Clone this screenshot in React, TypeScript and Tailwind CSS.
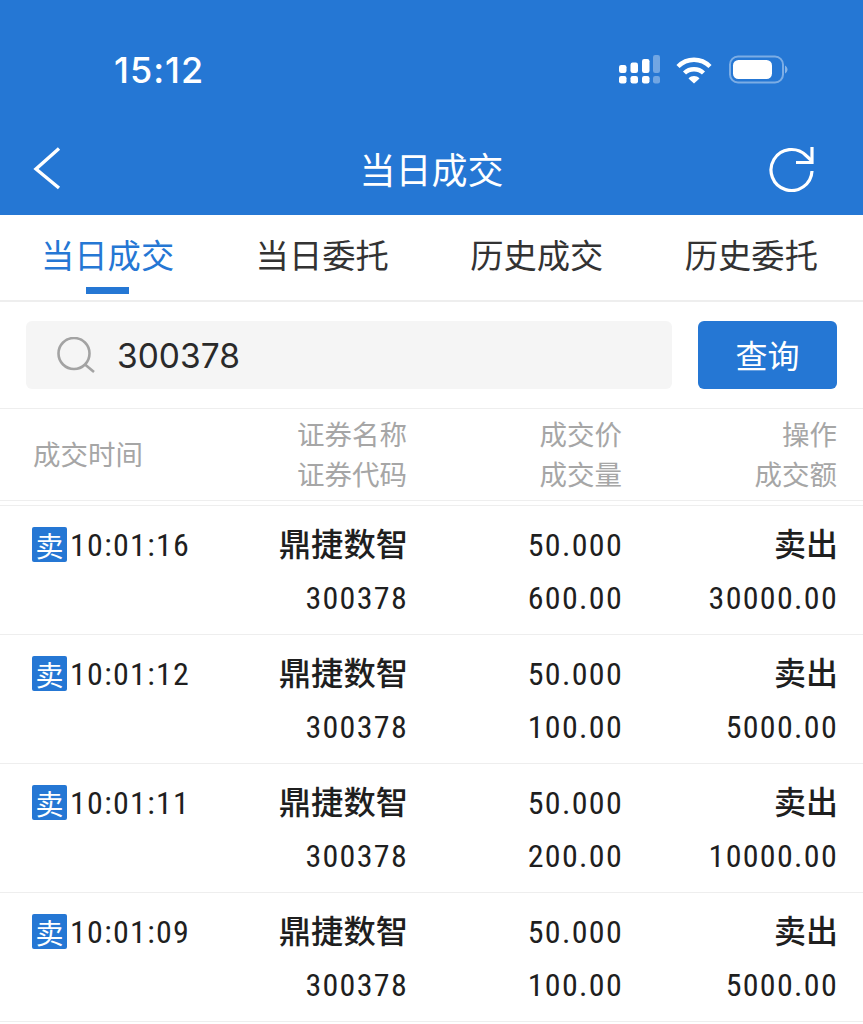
const cjk = "font-['Noto_Sans_CJK_SC','Noto_Sans',sans-serif]";
const rows = [
  { time: "10:01:16", qty: "600.00", amt: "30000.00" },
  { time: "10:01:12", qty: "100.00", amt: "5000.00" },
  { time: "10:01:11", qty: "200.00", amt: "10000.00" },
  { time: "10:01:09", qty: "100.00", amt: "5000.00" },
];
const tabs = ["当日成交", "当日委托", "历史成交", "历史委托"];

function StatusIcons() {
  return (
    <svg width="172" height="32" viewBox="0 0 172 32" fill="none">
      <g fill="#fff">
        <rect x="3" y="10" width="7.5" height="8" rx="2.2" />
        <rect x="3" y="21" width="7.5" height="7.5" rx="2.2" />
        <rect x="14.5" y="7.5" width="7.5" height="10.5" rx="2.2" />
        <rect x="14.5" y="21" width="7.5" height="7.5" rx="2.2" />
        <rect x="26" y="4" width="7.5" height="14" rx="2.2" />
        <rect x="26" y="21" width="7.5" height="7.5" rx="2.2" />
      </g>
      <g fill="#fff" fillOpacity="0.35">
        <rect x="37" y="0" width="7" height="18" rx="2.2" />
        <rect x="37" y="21" width="7" height="7.5" rx="2.2" />
      </g>
      <path d="M62 11.5C71 2.5 85 2.5 94 11.5" stroke="#fff" strokeWidth="4.4" />
      <path d="M68.5 18C73.7 13 82.3 13 87.5 18" stroke="#fff" strokeWidth="4.4" />
      <path d="M72.5 23.5C75.6 20.3 80.4 20.3 83.5 23.5L78 28.5Z" fill="#fff" />
      <rect x="114" y="1.5" width="53" height="26" rx="8" stroke="#fff" strokeOpacity="0.4" strokeWidth="2" />
      <rect x="117" y="5" width="39" height="19" rx="5.5" fill="#fff" />
      <path d="M169 10.5C170.5 11.5 171.5 13 171.5 14.5C171.5 16 170.5 17.5 169 18.5Z" fill="#fff" fillOpacity="0.45" />
    </svg>
  );
}

export default function App() {
  return (
    <div className={`h-[1024px] w-[863px] overflow-hidden bg-white ${cjk}`}>
      <header className="h-[215px] bg-[#2577d4] text-white">
        <div className="flex h-[130px] items-start justify-between pl-[114px] pr-[75px] pt-[46px]">
          <span className="font-['Inter',sans-serif] text-[36px] font-medium leading-[48px] tracking-[1px]">15:12</span>
          <div className="mt-[9px]"><StatusIcons /></div>
        </div>
        <div className="grid h-[85px] grid-cols-[1fr_auto_1fr] items-start px-[32px] pt-[14px]">
          <svg width="32" height="48" viewBox="0 0 32 48" fill="none" className="ml-[1px] mt-[0px]">
            <path d="M26 4.5L3 25L26 44" stroke="#fff" strokeWidth="3.4" />
          </svg>
          <h1 className="text-[36px] leading-[48px]">当日成交</h1>
          <svg width="46" height="48" viewBox="0 0 46 48" fill="none" className="mr-[16px] mt-[0px] justify-self-end">
            <path d="M43 27A20.5 20.5 0 1 1 37 11.5L43 17" stroke="#fff" strokeWidth="3.2" />
            <path d="M43 3V18.5H27" stroke="#fff" strokeWidth="3.2" />
          </svg>
        </div>
      </header>

      <nav className="flex h-[87px] items-start justify-between border-b-2 border-[#eeeeee] pl-[41px] pr-[45px]">
        {tabs.map((t, i) => (
          <div key={t} className="flex h-[80px] flex-col items-center pt-[14px]">
            <span className={`text-[33.3px] leading-[50px] ${i === 0 ? "text-[#2577d4]" : "text-[#333333]"}`}>{t}</span>
            {i === 0 && <span className="mt-[8px] h-[7px] w-[43px] bg-[#2577d4]" />}
          </div>
        ))}
      </nav>

      <section className="flex h-[107px] items-start gap-[26px] border-b border-[#eeeeee] px-[26px] pt-[19px]">
        <div className="flex h-[68px] w-[646px] items-center rounded-[6px] bg-[#f5f5f5] pl-[31px]">
          <svg width="38" height="36" viewBox="0 0 38 36" fill="none">
            <circle cx="17" cy="16.5" r="15.5" stroke="#a3a3a3" strokeWidth="2.6" />
            <path d="M28 27.5L37 35" stroke="#a3a3a3" strokeWidth="2.6" />
          </svg>
          <span className="ml-[22px] mt-[2px] font-['Inter',sans-serif] text-[33.5px] leading-[44px] text-[#2a2a2a]">300378</span>
        </div>
        <button className="h-[68px] w-[139px] rounded-[6px] bg-[#2577d4] pb-[3px] text-[32px] text-white">查询</button>
      </section>

      <section className="grid h-[92px] grid-cols-[160px_215px_215px_215px] items-center border-b border-[#eeeeee] pb-[3px] pl-[32px] text-right text-[27.5px] leading-[40px] text-[#a6a6a6]">
        <div className="ml-[1px] text-left">成交时间</div>
        <div>证券名称<br />证券代码</div>
        <div>成交价<br />成交量</div>
        <div>操作<br />成交额</div>
      </section>
      <div className="h-[5px] border-b border-[#eeeeee]" />

      {rows.map((r) => (
        <div key={r.time} className="grid h-[129px] grid-cols-[160px_215px_215px_215px] border-b border-[#eeeeee] pl-[33px] pt-[13px] text-right font-['Roboto',sans-serif] text-[32px] font-stretch-[85%] leading-[53px] tracking-[1.3px] text-[#1f1f1f]">
          <div className="flex h-[53px] items-center text-left">
            <span className={`-ml-[1px] mr-[3px] flex h-[35px] w-[35px] shrink-0 -translate-y-[1px] items-center justify-center rounded-[2px] bg-[#2577d4] text-[28px] leading-none tracking-normal text-white ${cjk}`}>卖</span>
            <span>{r.time}</span>
          </div>
          <div>
            <div className={`h-[53px] text-[32.3px] font-medium leading-[47px] tracking-normal ${cjk}`}>鼎捷数智</div>
            <div>300378</div>
          </div>
          <div>
            <div>50.000</div>
            <div>{r.qty}</div>
          </div>
          <div>
            <div className={`h-[53px] font-medium leading-[47px] tracking-normal ${cjk}`}>卖出</div>
            <div>{r.amt}</div>
          </div>
        </div>
      ))}
    </div>
  );
}
